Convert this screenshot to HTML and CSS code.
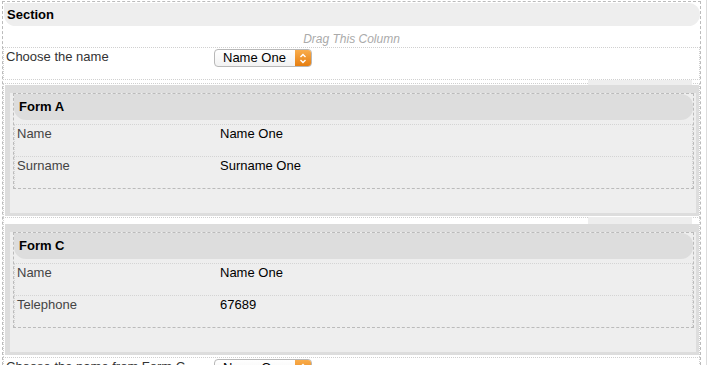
FILE: index.html
```html
<!DOCTYPE html>
<html>
<head>
<meta charset="utf-8">
<link rel="stylesheet" href="styles.css">
</head>
<body>
<div class="page">
  <div class="section">
    <div class="section-head">Section</div>
    <div class="drag">Drag This Column</div>

    <div class="field field-line">
      <div class="label">Choose the name</div>
      <div class="select"><span class="select-text">Name One</span><span class="select-btn"><svg width="16" height="16" viewBox="0 0 16 16"><path d="M5.5 7 L8 4.5 L10.5 7" fill="none" stroke="#fff" stroke-width="1.4"/><path d="M5.5 10 L8 12.5 L10.5 10" fill="none" stroke="#fff" stroke-width="1.4"/></svg></span></div>
    </div>

    <div class="field field-form field-a">
      <div class="handle handle-a"></div>
      <div class="form-wrap">
        <div class="form-inner">
          <div class="form-box">
            <div class="form-head">Form A</div>
            <div class="frow"><div class="flabel">Name</div><div class="fvalue">Name One</div></div>
            <div class="frow"><div class="flabel">Surname</div><div class="fvalue">Surname One</div></div>
          </div>
        </div>
      </div>
    </div>

    <div class="field field-form field-c">
      <div class="handle handle-c"></div>
      <div class="form-wrap">
        <div class="form-inner">
          <div class="form-box">
            <div class="form-head">Form C</div>
            <div class="frow"><div class="flabel">Name</div><div class="fvalue">Name One</div></div>
            <div class="frow"><div class="flabel">Telephone</div><div class="fvalue">67689</div></div>
          </div>
        </div>
      </div>
    </div>

    <div class="field field-line field-last">
      <div class="label">Choose the name from Form C</div>
      <div class="select"><span class="select-text">Name One</span><span class="select-btn"><svg width="16" height="16" viewBox="0 0 16 16"><path d="M5.5 7 L8 4.5 L10.5 7" fill="none" stroke="#fff" stroke-width="1.4"/><path d="M5.5 10 L8 12.5 L10.5 10" fill="none" stroke="#fff" stroke-width="1.4"/></svg></span></div>
    </div>
  </div>
</div>
</body>
</html>
```

FILE: styles.css
```css
html, body {
  margin: 0;
  padding: 0;
  background: #fff;
}
body {
  font-family: "Liberation Sans", Arial, sans-serif;
  font-size: 13px;
  color: #000;
  overflow: hidden;
  height: 365px;
}
.page {
  box-sizing: border-box;
  width: 707px;
  height: 365px;
  padding: 1px 0 0 2px;
  border-right: 1px solid #dcdcdc;
  overflow: hidden;
}
.section {
  box-sizing: border-box;
  width: 699px;
  height: 364px;
  overflow: hidden;
  border: 1px dashed #bbb;
  border-bottom: none;
}
.section-head {
  margin: 1px 0 0 1px;
  height: 23px;
  line-height: 23px;
  padding-left: 3px;
  background: #eee;
  border-radius: 0 12px 12px 12px;
  font-weight: bold;
}
.drag {
  box-sizing: border-box;
  height: 21px;
  padding-top: 6px;
  line-height: 14px;
  text-align: center;
  font-size: 12px;
  font-style: italic;
  color: #aaa;
}
.field {
  border-left: 1px dotted #d0d0d0;
  border-right: 1px dotted #d0d0d0;
  border-top: 1px dotted #d0d0d0;
}
.field-line {
  box-sizing: border-box;
  height: 33px;
  display: flex;
  align-items: flex-start;
  padding: 1px 0 0 2px;
  border-bottom: 1px dotted #d0d0d0;
}
.field-last {
  border-bottom: none;
}
.label {
  width: 208px;
  flex: none;
  color: #333;
  line-height: 15px;
}
.select {
  box-sizing: border-box;
  width: 98px;
  height: 18px;
  border: 1px solid #b8b8b8;
  border-radius: 4px;
  background: linear-gradient(#ffffff, #f2f2f2);
  display: flex;
  align-items: stretch;
  overflow: hidden;
}
.select-text {
  flex: 1;
  padding-left: 8px;
  line-height: 16px;
  color: #000;
}
.select-btn {
  width: 16px;
  flex: none;
  background: linear-gradient(#f9ad4c, #e67e10);
  display: flex;
  align-items: center;
  justify-content: center;
}
.field-form {
  position: relative;
  padding: 1px 0 1px 1px;
}
.field-a {
  margin-top: 3px;
}
.field-c {
  padding-top: 6px;
  padding-bottom: 2px;
}
.handle {
  position: absolute;
  left: 584px;
  width: 104px;
  background: #eee;
  z-index: 1;
}
.handle-a {
  top: -4px;
  height: 5px;
}
.handle-c {
  top: -1px;
  height: 7px;
}
.form-wrap {
  background: #ddd;
  padding: 8px 3px 3px 5px;
}
.form-inner {
  background: #eee;
  padding: 0 2px 24px 3px;
}
.form-box {
  border: 1px dashed #bbb;
}
.form-head {
  height: 26px;
  line-height: 26px;
  padding-left: 5px;
  margin-bottom: 4px;
  background: #ddd;
  border-radius: 0 12px 12px 12px;
  font-weight: bold;
}
.frow {
  box-sizing: border-box;
  height: 32px;
  display: flex;
  padding: 1px 0 0 2px;
  border-top: 1px dotted #d4d4d4;
  border-left: 1px dotted #d4d4d4;
  border-right: 1px dotted #d4d4d4;
  line-height: 15px;
}
.flabel {
  width: 203px;
  flex: none;
  color: #444;
}
.fvalue {
  color: #000;
}
```
